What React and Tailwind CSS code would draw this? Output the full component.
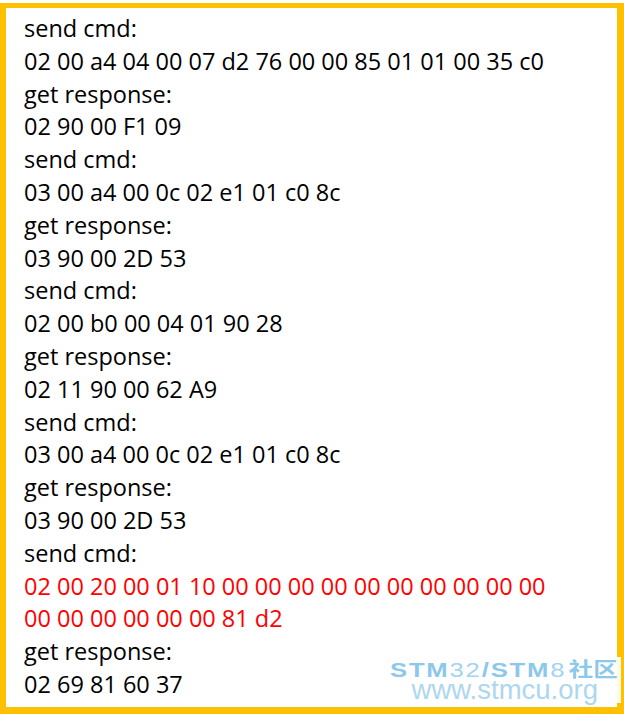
const LINES = [
  { t: 'send cmd:' },
  { t: '02 00 a4 04 00 07 d2 76 00 00 85 01 01 00 35 c0' },
  { t: 'get response:' },
  { t: '02 90 00 F1 09' },
  { t: 'send cmd:' },
  { t: '03 00 a4 00 0c 02 e1 01 c0 8c' },
  { t: 'get response:' },
  { t: '03 90 00 2D 53' },
  { t: 'send cmd:' },
  { t: '02 00 b0 00 04 01 90 28' },
  { t: 'get response:' },
  { t: '02 11 90 00 62 A9' },
  { t: 'send cmd:' },
  { t: '03 00 a4 00 0c 02 e1 01 c0 8c' },
  { t: 'get response:' },
  { t: '03 90 00 2D 53' },
  { t: 'send cmd:' },
  { t: '02 00 20 00 01 10 00 00 00 00 00 00 00 00 00 00', red: true },
  { t: '00 00 00 00 00 00 81 d2', red: true },
  { t: 'get response:' },
  { t: '02 69 81 60 37' },
];

// Faded site watermark in the bottom right corner
function Watermark() {
  return (
    <div className="absolute right-[-4px] bottom-[4px] bg-white/90 pl-[4px] pr-[3px] pt-[2px] flex flex-col items-end font-['Liberation_Sans','Noto_Sans_CJK_SC',sans-serif] leading-none">
      <div className="flex items-baseline text-[21px] tracking-[1.5px] text-[#8cc8ea] scale-x-[1.22] origin-right">
        <span className="font-bold">STM</span>
        <span className="text-[#a3d3f0]">32</span>
        <span className="font-bold">/STM</span>
        <span className="text-[#a3d3f0]">8</span>
        <span className="font-['Noto_Sans_CJK_SC',sans-serif] font-bold text-[20px] tracking-[0px] ml-[2px]">社区</span>
      </div>
      <div className="text-[27.5px] text-[#acd7f0] mr-[20px] -mt-[4px]">www.stmcu.org</div>
    </div>
  );
}

export default function App() {
  return (
    <div className="w-[624px] h-[715px] bg-white pt-[3px]">
      <div className="relative h-[711px] bg-white border-[#ffc000] border-l-[6px] border-r-[7px] border-t-[5px] border-b-[7px] pl-[18px] pt-[4px] font-['Open_Sans',sans-serif] text-[23.5px] leading-[32.8px] text-black">
        {LINES.map((l, i) => (
          <div key={i} className={l.red ? 'text-[#ff0000]' : ''}>{l.t}</div>
        ))}
        <Watermark />
      </div>
    </div>
  );
}
